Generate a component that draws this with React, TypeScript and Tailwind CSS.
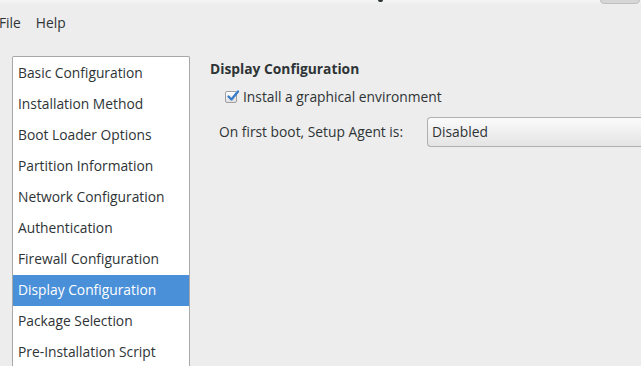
import React from "react";

const items = [
  "Basic Configuration",
  "Installation Method",
  "Boot Loader Options",
  "Partition Information",
  "Network Configuration",
  "Authentication",
  "Firewall Configuration",
  "Display Configuration",
  "Package Selection",
  "Pre-Installation Script",
];

export default function App() {
  return (
    <div
      className="w-[641px] h-[366px] overflow-hidden bg-[#ededed] text-[#2e3436] flex flex-col"
      style={{ fontFamily: '"Open Sans", "DejaVu Sans", sans-serif' }}
    >
      {/* title bar remnant */}
      <div className="relative h-[5px] shrink-0 bg-gradient-to-b from-[#f4f4f4] to-[#ededed] overflow-hidden">
        <div className="absolute left-[378px] top-0 w-[5px] h-[2px] rounded-b-[2px] bg-[#2e3436]" />
        <div className="absolute left-[600px] top-[-6px] w-[40px] h-[10px] rounded-[4px] bg-[#d6d6d6] border border-[#c0c0c0]" />
      </div>
      {/* menu bar */}
      <div className="h-[36px] shrink-0 flex items-center gap-[15px] text-[13.8px] -ml-[1px] pt-[1px]">
        <span>File</span>
        <span>Help</span>
      </div>
      {/* body */}
      <div className="flex flex-1 pt-[15px]">
        <div className="ml-[12px] w-[178px] bg-white border border-[#a8a8a8] rounded-t-[2px] border-b-0 flex flex-col text-[13.8px] pt-[1px]">
          {items.map((t) => {
            const sel = t === "Display Configuration";
            return (
              <div
                key={t}
                className={
                  "h-[31px] shrink-0 flex items-center pl-[5px] " +
                  (sel ? "bg-[#4a90d9] text-white" : "")
                }
              >
                {t}
              </div>
            );
          })}
        </div>
        <div className="flex-1 flex flex-col pl-[20px] pt-[1px] text-[13.8px]">
          <div className="font-bold h-[24px] flex items-center">Display Configuration</div>
          <div className="flex items-center h-[22px] mt-[5px] pl-[15px] gap-[6px]">
            <span className="w-[12px] h-[12px] rounded-[2px] border border-[#a0a0a0] bg-gradient-to-b from-white to-[#e0e0e0] relative">
              <svg viewBox="0 0 14 14" className="absolute left-[0px] top-[-3px] w-[14px] h-[14px]">
                <path d="M2.5 7.5 L5.5 10.5 L12 2.5" fill="none" stroke="#3a7dc9" strokeWidth="2.4" strokeLinecap="round" strokeLinejoin="round" />
              </svg>
            </span>
            <span>Install a graphical environment</span>
          </div>
          <div className="flex items-center mt-[9px] pl-[9px]">
            <span className="w-[208px]">On first boot, Setup Agent is:</span>
            <div className="flex-1 h-[30px] border border-[#b0b0b0] rounded-l-[4px] border-r-0 bg-gradient-to-b from-[#fbfbfb] to-[#e4e4e4] flex items-center pl-[4px]">
              Disabled
            </div>
          </div>
        </div>
      </div>
    </div>
  );
}
